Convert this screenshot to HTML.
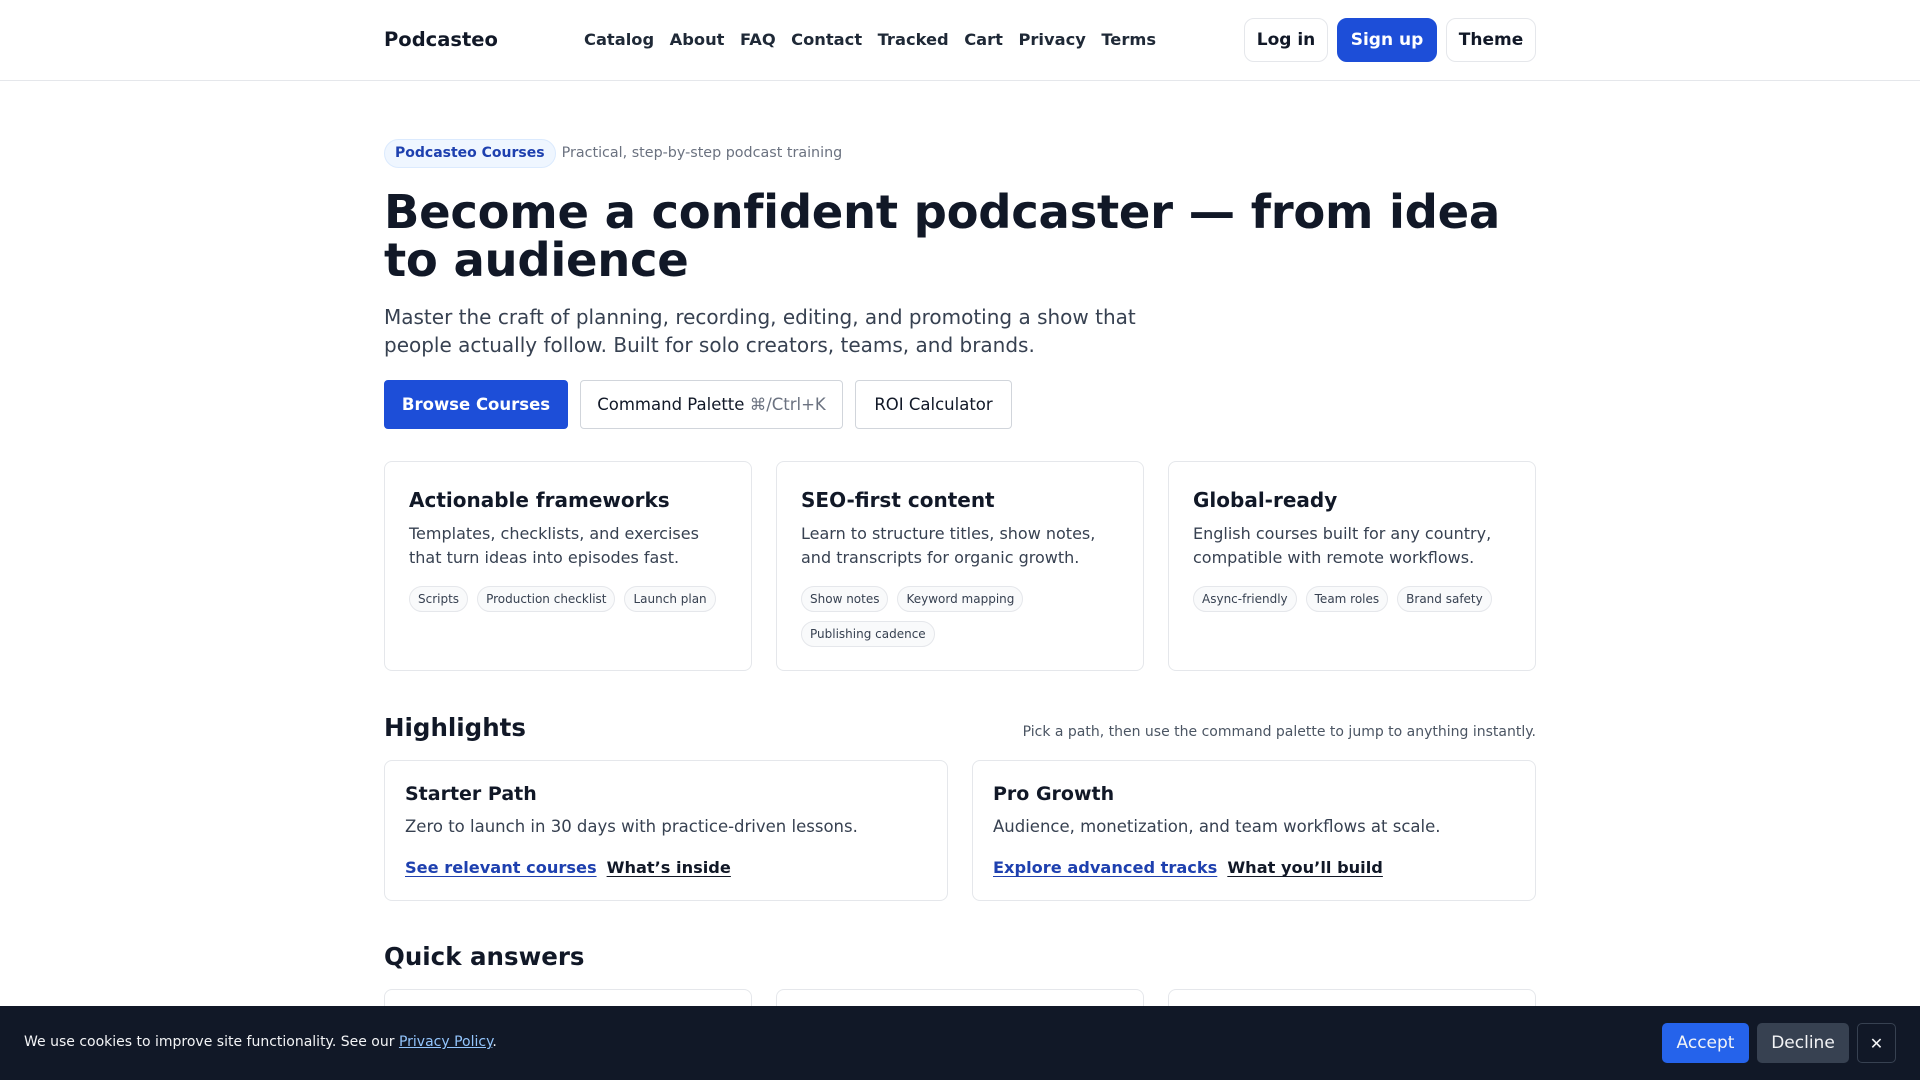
<!DOCTYPE html>
<html><head><meta charset="utf-8">
<style>
*{box-sizing:border-box;margin:0;padding:0}
html,body{width:1920px;height:1080px;overflow:hidden}
body{background:#fff;font-family:"DejaVu Sans","Liberation Sans",sans-serif;color:#111827;position:relative}
.nav{height:81px;border-bottom:1px solid #e5e7eb;position:relative}
.logo{position:absolute;left:384px;top:28px;font-size:19.5px;font-weight:bold}
.links{position:absolute;left:584px;top:30px;font-size:16.3px;font-weight:bold;display:flex;gap:15.5px;color:#1f2937}
.nb{position:absolute;top:18px;height:44px;border:1px solid #e5e7eb;border-radius:10px;font-size:17px;font-weight:bold;display:flex;align-items:center;justify-content:center;background:#fff}
.wrap{position:absolute;left:384px;width:1152px}
.badge{display:inline-block;height:29px;line-height:27px;padding:0 10px;border-radius:15px;background:#eff6ff;border:1px solid #dbeafe;color:#1e40af;font-size:14px;font-weight:bold}
.sub{color:#6b7280;font-size:14.3px;margin-left:6px}
h1{font-size:46.5px;line-height:48px;font-weight:bold;letter-spacing:-0.3px;color:#111827}
.lead{font-size:20px;line-height:28px;color:#374151;width:770px}
.btn{position:absolute;top:380px;height:49px;border:1px solid #d1d5db;border-radius:4px;font-size:16.5px;display:flex;align-items:center;justify-content:center;background:#fff;color:#111827}
.card{position:absolute;border:1px solid #e5e7eb;border-radius:8px;background:#fff}
.card h3{font-size:20px;font-weight:bold;margin:26px 0 0 24px}
.card p{font-size:16px;line-height:24px;color:#374151;margin:10px 24px 0 24px}
.tags{margin:16px 24px 0 24px;display:flex;flex-wrap:wrap;gap:9px 9px}
.tag{height:26px;line-height:24px;padding:0 8px;border:1px solid #e5e7eb;border-radius:13px;background:#f9fafb;font-size:12px;color:#374151}
h2{position:absolute;left:384px;font-size:24.5px;font-weight:bold}
.hc h3{font-size:19px;margin:22px 0 0 20px}
.hc p{font-size:16.5px;margin:10px 20px 0 20px}
.hl{margin:19px 0 0 20px;font-size:16.2px;font-weight:bold}
.hl a{text-decoration:underline;text-underline-offset:3px;margin-right:10px}
.cookie{position:absolute;left:0;top:1006px;width:1920px;height:74px;background:#111827;color:#f3f4f6}
.cb{position:absolute;top:17px;height:40px;border-radius:5px;font-size:17px;display:flex;align-items:center;justify-content:center;color:#f3f4f6}
</style></head><body>
<div class="nav">
<div class="logo">Podcasteo</div>
<div class="links"><span>Catalog</span><span>About</span><span>FAQ</span><span>Contact</span><span>Tracked</span><span>Cart</span><span>Privacy</span><span>Terms</span></div>
<div class="nb" style="left:1244px;width:84px">Log in</div>
<div class="nb" style="left:1337px;width:100px;background:#1d4ed8;border-color:#1d4ed8;color:#fff">Sign up</div>
<div class="nb" style="left:1446px;width:90px">Theme</div>
</div>
<div class="wrap" style="top:139px"><span class="badge">Podcasteo Courses</span><span class="sub">Practical, step-by-step podcast training</span></div>
<div class="wrap" style="top:188px"><h1>Become a confident podcaster — from idea to audience</h1></div>
<div class="wrap" style="top:303px"><p class="lead">Master the craft of planning, recording, editing, and promoting a show that people actually follow. Built for solo creators, teams, and brands.</p></div>
<div class="btn" style="left:384px;width:184px;background:#1d4ed8;border-color:#1d4ed8;color:#fff;font-weight:bold">Browse Courses</div>
<div class="btn" style="left:580px;width:263px">Command Palette&nbsp;<span style="color:#6b7280">⌘/Ctrl+K</span></div>
<div class="btn" style="left:855px;width:157px">ROI Calculator</div>

<div class="card" style="left:384px;top:461px;width:368px;height:210px"><h3>Actionable frameworks</h3><p>Templates, checklists, and exercises that turn ideas into episodes fast.</p><div class="tags"><span class="tag">Scripts</span><span class="tag">Production checklist</span><span class="tag">Launch plan</span></div></div>
<div class="card" style="left:776px;top:461px;width:368px;height:210px"><h3>SEO-first content</h3><p>Learn to structure titles, show notes, and transcripts for organic growth.</p><div class="tags"><span class="tag">Show notes</span><span class="tag">Keyword mapping</span><span class="tag">Publishing cadence</span></div></div>
<div class="card" style="left:1168px;top:461px;width:368px;height:210px"><h3>Global-ready</h3><p>English courses built for any country, compatible with remote workflows.</p><div class="tags"><span class="tag">Async-friendly</span><span class="tag">Team roles</span><span class="tag">Brand safety</span></div></div>

<h2 style="top:713px">Highlights</h2>
<div style="position:absolute;right:384px;top:724px;font-size:14px;color:#4b5563">Pick a path, then use the command palette to jump to anything instantly.</div>
<div class="card hc" style="left:384px;top:760px;width:564px;height:141px"><h3>Starter Path</h3><p>Zero to launch in 30 days with practice-driven lessons.</p><div class="hl"><a style="color:#1e40af">See relevant courses</a><a style="color:#111827">What’s inside</a></div></div>
<div class="card hc" style="left:972px;top:760px;width:564px;height:141px"><h3>Pro Growth</h3><p>Audience, monetization, and team workflows at scale.</p><div class="hl"><a style="color:#1e40af">Explore advanced tracks</a><a style="color:#111827">What you’ll build</a></div></div>

<h2 style="top:942px">Quick answers</h2>
<div class="card" style="left:384px;top:989px;width:368px;height:60px"></div>
<div class="card" style="left:776px;top:989px;width:368px;height:60px"></div>
<div class="card" style="left:1168px;top:989px;width:368px;height:60px"></div>

<div class="cookie">
<div style="position:absolute;left:24px;top:28px;font-size:14px">We use cookies to improve site functionality. See our <span style="color:#93c5fd;text-decoration:underline">Privacy Policy</span>.</div>
<div class="cb" style="left:1662px;width:87px;background:#2563eb">Accept</div>
<div class="cb" style="left:1757px;width:92px;background:#374151">Decline</div>
<div class="cb" style="left:1857px;width:39px;border:1px solid #374151;font-size:16px">✕</div>
</div>
</body></html>
